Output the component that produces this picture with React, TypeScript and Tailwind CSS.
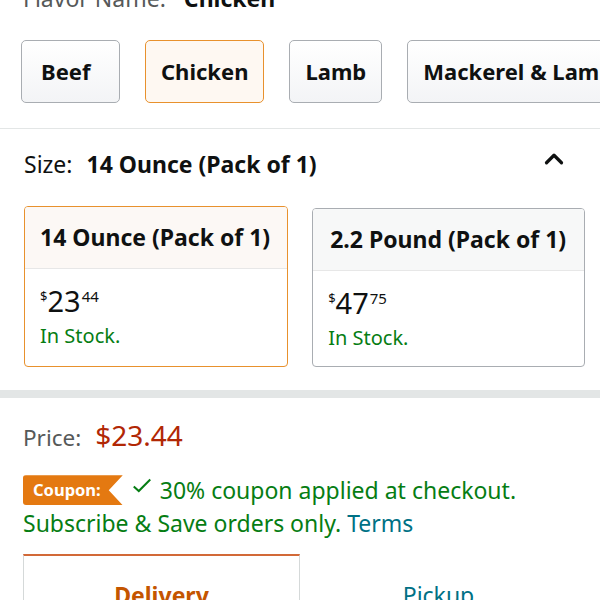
import { ChevronUp } from 'lucide-react'

const flavors = ['Beef', 'Chicken', 'Lamb', 'Mackerel & Lamb']

type Size = { label: string; dollars: string; cents: string; selected: boolean }

const sizes: Size[] = [
  { label: '14 Ounce (Pack of 1)', dollars: '23', cents: '44', selected: true },
  { label: '2.2 Pound (Pack of 1)', dollars: '47', cents: '75', selected: false },
]

function SizeCard({ size }: { size: Size }) {
  return (
    <div
      className={
        'shrink-0 rounded-[4px] border-[1.5px] overflow-hidden ' +
        (size.selected ? 'border-[#e8912d]' : 'border-[#a9adb2] mt-[2px]')
      }
    >
      <div
        className={
          'h-[62px] flex items-center pl-[15px] pr-[17px] border-b border-[#e7e7e7] text-[23px] font-bold text-[#0f1111] whitespace-nowrap ' +
          (size.selected ? 'bg-[#fcf8f5]' : 'bg-[#f7f8f8] pl-[17px] pr-[18px]')
        }
      >
        {size.label}
      </div>
      <div className={'pt-[19px] pb-[16px] ' + (size.selected ? 'px-[15px]' : 'px-[15px]')}>
        <div className="flex items-start text-[#0f1111] leading-none">
          <span className="text-[13px] mt-[2px]">$</span>
          <span className="text-[29px] -mt-[2px]">{size.dollars}</span>
          <span className="text-[15px] mt-[1px] ml-[1px]">{size.cents}</span>
        </div>
        <div className="text-[20px] text-[#067d13] mt-[8px] leading-tight">In Stock.</div>
      </div>
    </div>
  )
}

export default function App() {
  return (
    <div
      className="w-[600px] h-[600px] overflow-hidden bg-white text-[#0f1111]"
      style={{ fontFamily: '"Noto Sans", "Open Sans", sans-serif' }}
    >
      <div className="px-[23px] -mt-[17px] text-[23px] leading-[30px] text-[#565959] whitespace-nowrap">
        Flavor Name: <span className="ml-[12px] font-bold text-[#0f1111]">Chicken</span>
      </div>

      <div className="flex gap-[25px] pl-[21px] mt-[27px] pb-[25px] border-b border-[#e3e6e6] whitespace-nowrap">
        {flavors.map((f) => {
          const sel = f === 'Chicken'
          return (
            <div
              key={f}
              className={
                'shrink-0 h-[63px] flex items-center rounded-[5px] border-[1.5px] text-[22px] font-bold ' +
                (f === 'Beef' ? 'w-[99px] pl-[19px] ' : 'px-[15px] ') +
                (sel
                  ? 'border-[#e8912d] bg-[#fef8f2]'
                  : 'border-[#a9adb2] bg-gradient-to-b from-white to-[#f3f4f6]')
              }
            >
              {f}
            </div>
          )
        })}
      </div>

      <div className="flex items-center justify-between pl-[24px] pr-[31px] pt-[18px] h-[70px]">
        <div className="text-[23px] leading-[30px] -mt-[18px] whitespace-nowrap">
          <span className="text-[#0f1111]">Size:</span>
          <span className="ml-[14px] font-bold">14 Ounce (Pack of 1)</span>
        </div>
        <ChevronUp size={30} strokeWidth={2.6} className="-mt-[28px]" />
      </div>

      <div className="flex gap-[24px] pl-[24px] mt-[7px]">
        {sizes.map((s) => (
          <SizeCard key={s.label} size={s} />
        ))}
      </div>

      <div className="h-[8px] bg-[#e3e6e6] mt-[23px]" />

      <div className="px-[23px] pt-[16px]">
        <div className="flex items-baseline">
          <span className="text-[22.5px] text-[#565959]">Price:</span>
          <span className="ml-[14px] text-[28px] text-[#b12704]">$23.44</span>
        </div>

        <div className="mt-[17px] flex items-center">
          <span
            className="h-[30px] pl-[10px] pr-[22px] flex items-center text-[16.5px] font-bold text-white bg-[#e47911] rounded-l-[3px]"
            style={{ clipPath: 'polygon(0 0, 100% 0, 86% 50%, 100% 100%, 0 100%)' }}
          >
            Coupon:
          </span>
          <svg width="22" height="22" viewBox="0 0 24 24" className="ml-[8px] -mt-[8px]" fill="none" stroke="#067d13" strokeWidth="2.2">
            <path d="M3 12.5l5.5 5L21 5" />
          </svg>
          <span className="ml-[7px] text-[23px] text-[#067d13] whitespace-nowrap">30% coupon applied at checkout.</span>
        </div>
        <div className="text-[23px] text-[#067d13] leading-[30px] whitespace-nowrap">
          Subscribe &amp; Save orders only. <span className="text-[#007185]">Terms</span>
        </div>

        <div className="flex mt-[16px]">
          <div className="w-[277px] h-[80px] border-t-2 border-t-[#d26938] border-x border-x-[#d5d9d9] flex justify-center pt-[22px] text-[23px] font-bold text-[#c45500]">
            Delivery
          </div>
          <div className="w-[277px] flex justify-center pt-[24px] text-[23px] text-[#007185]">Pickup</div>
        </div>
      </div>
    </div>
  )
}
